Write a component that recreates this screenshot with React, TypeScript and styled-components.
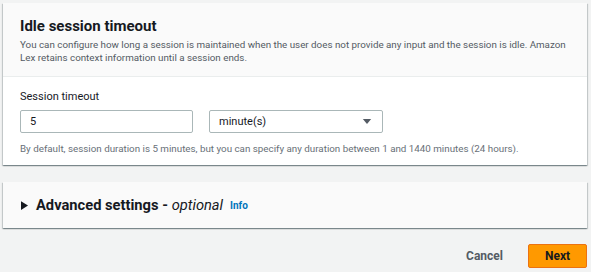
import React, { useState } from 'react';
import styled, { createGlobalStyle } from 'styled-components';

const GlobalStyle = createGlobalStyle`
  body {
    margin: 0;
    background: #f2f3f3;
    font-family: Roboto, 'Noto Sans', Arial, sans-serif;
    color: #16191f;
  }
`;

export default function App() {
  const [timeout, setTimeoutValue] = useState('5');

  return (
    <Page>
      <GlobalStyle />
      <Card>
        <CardHeader>
          <Title>Idle session timeout</Title>
          <Description>
            You can configure how long a session is maintained when the user does not provide any
            input and the session is idle. Amazon Lex retains context information until a session
            ends.
          </Description>
        </CardHeader>
        <CardBody>
          <Label>Session timeout</Label>
          <FieldRow>
            <TextInput value={timeout} onChange={(e) => setTimeoutValue(e.target.value)} />
            <Select>
              <span>minute(s)</span>
              <Caret viewBox="0 0 12 8">
                <path d="M1 1h10L6 7z" fill="#545b64" />
              </Caret>
            </Select>
          </FieldRow>
          <Hint>
            By default, session duration is 5 minutes, but you can specify any duration between 1
            and 1440 minutes (24 hours).
          </Hint>
        </CardBody>
      </Card>

      <Expander>
        <ExpandIcon viewBox="0 0 8 10">
          <path d="M0 0l8 5-8 5z" fill="#16191f" />
        </ExpandIcon>
        <ExpanderTitle>
          Advanced settings - <em>optional</em>
        </ExpanderTitle>
        <InfoLink>Info</InfoLink>
      </Expander>

      <Actions>
        <LinkButton>Cancel</LinkButton>
        <PrimaryButton>Next</PrimaryButton>
      </Actions>
    </Page>
  );
}

const Page = styled.div`
  padding: 3px 4px 0 3px;
  display: flex;
  flex-direction: column;
`;

const Card = styled.div`
  background: #ffffff;
  box-shadow: 0 1px 1px 0 rgba(0, 28, 36, 0.3), 1px 1px 1px 0 rgba(0, 28, 36, 0.15),
    -1px 1px 1px 0 rgba(0, 28, 36, 0.15);
`;

const CardHeader = styled.div`
  background: #fafafa;
  border-bottom: 1px solid #eaeded;
  padding: 12px 17px 12px;
`;

const Title = styled.h2`
  margin: 0;
  font-size: 15px;
  font-weight: 700;
  line-height: 22px;
`;

const Description = styled.p`
  margin: 1px 0 0;
  font-size: 9.8px;
  line-height: 13px;
  color: #545b64;
`;

const CardBody = styled.div`
  padding: 11px 17px 9px;
`;

const Label = styled.div`
  font-size: 11px;
  line-height: 18px;
  color: #16191f;
  margin-bottom: 4px;
`;

const FieldRow = styled.div`
  display: flex;
  gap: 16px;
`;

const TextInput = styled.input`
  box-sizing: border-box;
  width: 173px;
  height: 23px;
  border: 1px solid #aab7b8;
  border-radius: 2px;
  padding: 0 9px;
  font-family: inherit;
  font-size: 11px;
  color: #16191f;
  outline: none;
`;

const Select = styled.div`
  box-sizing: border-box;
  width: 174px;
  height: 23px;
  border: 1px solid #aab7b8;
  border-radius: 2px;
  padding: 0 10px 0 9px;
  display: flex;
  align-items: center;
  justify-content: space-between;
  font-size: 11px;
  color: #16191f;
`;

const Caret = styled.svg`
  width: 10px;
  height: 7px;
`;

const Hint = styled.div`
  margin-top: 9px;
  font-size: 9.8px;
  line-height: 14px;
  color: #687078;
`;

const Expander = styled.div`
  margin-top: 17px;
  height: 46px;
  background: #fafafa;
  box-shadow: 0 1px 1px 0 rgba(0, 28, 36, 0.3), 1px 1px 1px 0 rgba(0, 28, 36, 0.15),
    -1px 1px 1px 0 rgba(0, 28, 36, 0.15);
  display: flex;
  align-items: center;
  padding: 0 18px;
`;

const ExpandIcon = styled.svg`
  width: 7px;
  height: 9px;
  margin-right: 8px;
`;

const ExpanderTitle = styled.span`
  font-size: 14.7px;
  font-weight: 700;
  em {
    font-weight: 400;
  }
`;

const InfoLink = styled.span`
  margin-left: 7px;
  font-size: 10px;
  font-weight: 700;
  color: #0073bb;
`;

const Actions = styled.div`
  display: flex;
  justify-content: flex-end;
  align-items: center;
  margin-top: 16px;
  gap: 25px;
`;

const LinkButton = styled.button`
  background: none;
  border: none;
  font-family: inherit;
  font-size: 12px;
  font-weight: 700;
  color: #545b64;
  padding: 0;
`;

const PrimaryButton = styled.button`
  width: 59px;
  height: 24px;
  background: #ff9900;
  border: 1px solid #ec7211;
  border-radius: 2px;
  font-family: inherit;
  font-size: 12px;
  font-weight: 700;
  color: #16191f;
  padding: 0;
`;
